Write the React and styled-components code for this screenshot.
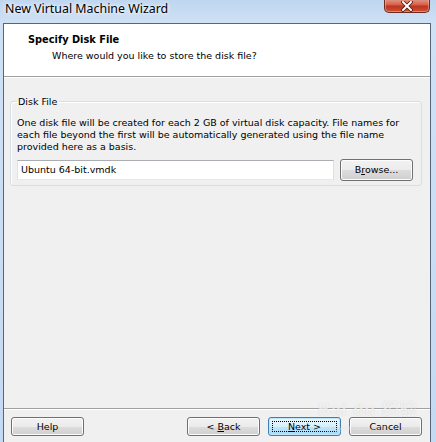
import React from "react";
import styled, { createGlobalStyle } from "styled-components";

const Global = createGlobalStyle`
  html, body { margin: 0; padding: 0; }
  body { background: #c7dcf3; }
  * { box-sizing: border-box; }
`;

const Win = styled.div`
  position: relative;
  width: 436px;
  height: 442px;
  overflow: hidden;
  background: linear-gradient(180deg, #bfd6f0 0px, #cfe1f5 24px, #c4daf2 100%);
  display: flex;
  flex-direction: column;
  font-family: "DejaVu Sans", "Liberation Sans", sans-serif;
  font-size: 9.5px;
`;

const TitleBar = styled.div`
  height: 23px;
  flex: none;
  display: flex;
  align-items: flex-start;
  padding-left: 5px;
  padding-right: 6px;
`;

const Title = styled.div`
  font-family: "Noto Sans", "Open Sans", sans-serif;
  font-size: 12.4px;
  line-height: 16px;
  margin-top: 1px;
  color: #000;
  text-shadow: 0 0 6px #fff, 0 0 3px #fff;
`;

const CloseBtn = styled.div`
  margin-left: auto;
  width: 46px;
  height: 14px;
  margin-top: -1px;
  border: 1px solid #6e2a1f;
  border-top: none;
  border-radius: 0 0 5px 5px;
  background: linear-gradient(180deg, #e49a8a 0%, #d2604a 45%, #c0341c 55%, #cc5236 100%);
  box-shadow: inset 0 0 0 1px rgba(255, 200, 190, 0.45);
  display: flex;
  justify-content: center;
  align-items: flex-end;
`;

const Client = styled.div`
  flex: 1;
  margin: 0 5px 0 3px;
  border: 1px solid #56657a;
  border-bottom: none;
  background: #f0f0f0;
  display: flex;
  flex-direction: column;
`;

const Header = styled.div`
  height: 53px;
  flex: none;
  background: #fff;
  border-bottom: 1px solid #a0a0a0;
  box-shadow: 0 1px 0 #fff;
  padding: 9px 0 0 24px;
`;

const HeadTitle = styled.div`
  font-weight: bold;
  font-size: 9.8px;
  line-height: 13px;
  color: #000;
`;

const HeadSub = styled.div`
  margin-top: 3px;
  padding-left: 24px;
  line-height: 13px;
  color: #000;
`;

const Body = styled.div`
  flex: 1;
  padding: 18px 8px 0 6px;
  color: #000;
`;

const Group = styled.fieldset`
  margin: 0;
  padding: 0 7px 4px 6px;
  border: 1px solid #d5dfe5;
  border-radius: 3px;
  box-shadow: inset 1px 1px 0 #fff;
`;

const Legend = styled.legend`
  padding: 0 2px 0 1px;
  margin-left: 0;
  line-height: 13px;
  font-size: 9.5px;
`;

const Desc = styled.p`
  margin: 9px 0 0;
  line-height: 12.2px;
  white-space: nowrap;
`;

const FileRow = styled.div`
  display: flex;
  align-items: center;
  gap: 6px;
  margin-top: 5px;
`;

const Input = styled.div`
  width: 317px;
  height: 20px;
  border: 1px solid #abadb3;
  border-left-color: #e2e3ea;
  border-right-color: #dbdfe6;
  border-bottom-color: #e3e9ef;
  background: #fff;
  padding: 0 3px;
  line-height: 18px;
`;

const Button = styled.div`
  width: 73px;
  height: ${(p) => p.$h || 19}px;
  border: 1px solid ${(p) => (p.$def ? "#3c7fb1" : "#707070")};
  border-radius: 3px;
  background: ${(p) =>
    p.$def
      ? "linear-gradient(180deg, #eaf6fd 0%, #d9f0fc 50%, #bee6fd 51%, #a7d9f5 100%)"
      : "linear-gradient(180deg, #f2f2f2 0%, #ebebeb 50%, #dddddd 51%, #cfcfcf 100%)"};
  box-shadow: inset 0 0 0 1px ${(p) => (p.$def ? "#bfe6fb" : "#fcfcfc")};
  display: flex;
  align-items: center;
  justify-content: center;
  color: #000;
  flex: none;
  position: relative;
  u { text-decoration: underline; }
`;

const FocusRect = styled.span`
  position: absolute;
  inset: 3px;
  border: 1px dotted #000;
`;

const Footer = styled.div`
  flex: none;
  height: 34px;
  border-top: 1px solid #a0a0a0;
  box-shadow: inset 0 1px 0 #fff;
  display: flex;
  align-items: flex-start;
  padding: 8px 8px 0 7px;
  gap: 8px;
`;

const Spacer = styled.div`
  flex: 1;
`;

const Watermark = styled.div`
  position: absolute;
  left: 318px;
  top: 401px;
  color: rgba(255, 255, 255, 0.7);
  text-shadow: 0 0 1px rgba(120, 120, 120, 0.3);
  font-family: "Liberation Sans", "Noto Sans CJK SC", sans-serif;
  pointer-events: none;
`;

const WmBig = styled.div`
  font-size: 17px;
  font-weight: bold;
  line-height: 18px;
  letter-spacing: 1px;
`;

const WmSmall = styled.div`
  font-size: 7px;
  line-height: 8px;
  margin-top: 5px;
  margin-left: 10px;
  opacity: 0.6;
`;

export default function App() {
  return (
    <Win>
      <Global />
      <TitleBar>
        <Title>New Virtual Machine Wizard</Title>
        <CloseBtn>
          <svg width="14" height="11" viewBox="0 0 14 11">
            <path d="M3 1 L11 9 M11 1 L3 9" stroke="#4a1a12" strokeWidth="3.6" strokeLinecap="round" fill="none" />
            <path d="M3 1 L11 9 M11 1 L3 9" stroke="#fff" strokeWidth="2" strokeLinecap="round" fill="none" />
          </svg>
        </CloseBtn>
      </TitleBar>
      <Client>
        <Header>
          <HeadTitle>Specify Disk File</HeadTitle>
          <HeadSub>Where would you like to store the disk file?</HeadSub>
        </Header>
        <Body>
          <Group>
            <Legend>Disk File</Legend>
            <Desc>
              One disk file will be created for each 2 GB of virtual disk capacity. File names for
              <br />
              each file beyond the first will be automatically generated using the file name
              <br />
              provided here as a basis.
            </Desc>
            <FileRow>
              <Input>Ubuntu 64-bit.vmdk</Input>
              <Button $h={22}>
                <span>
                  B<u>r</u>owse...
                </span>
              </Button>
            </FileRow>
          </Group>
        </Body>
        <Footer>
          <Button>Help</Button>
          <Spacer />
          <Button>
            <span>
              &lt; <u>B</u>ack
            </span>
          </Button>
          <Button $def>
            <FocusRect />
            <span>
              <u>N</u>ext &gt;
            </span>
          </Button>
          <Button>Cancel</Button>
        </Footer>
      </Client>
      <Watermark>
        <WmBig>Bai du 经验</WmBig>
        <WmSmall>jingyan.baidu.com</WmSmall>
      </Watermark>
    </Win>
  );
}
